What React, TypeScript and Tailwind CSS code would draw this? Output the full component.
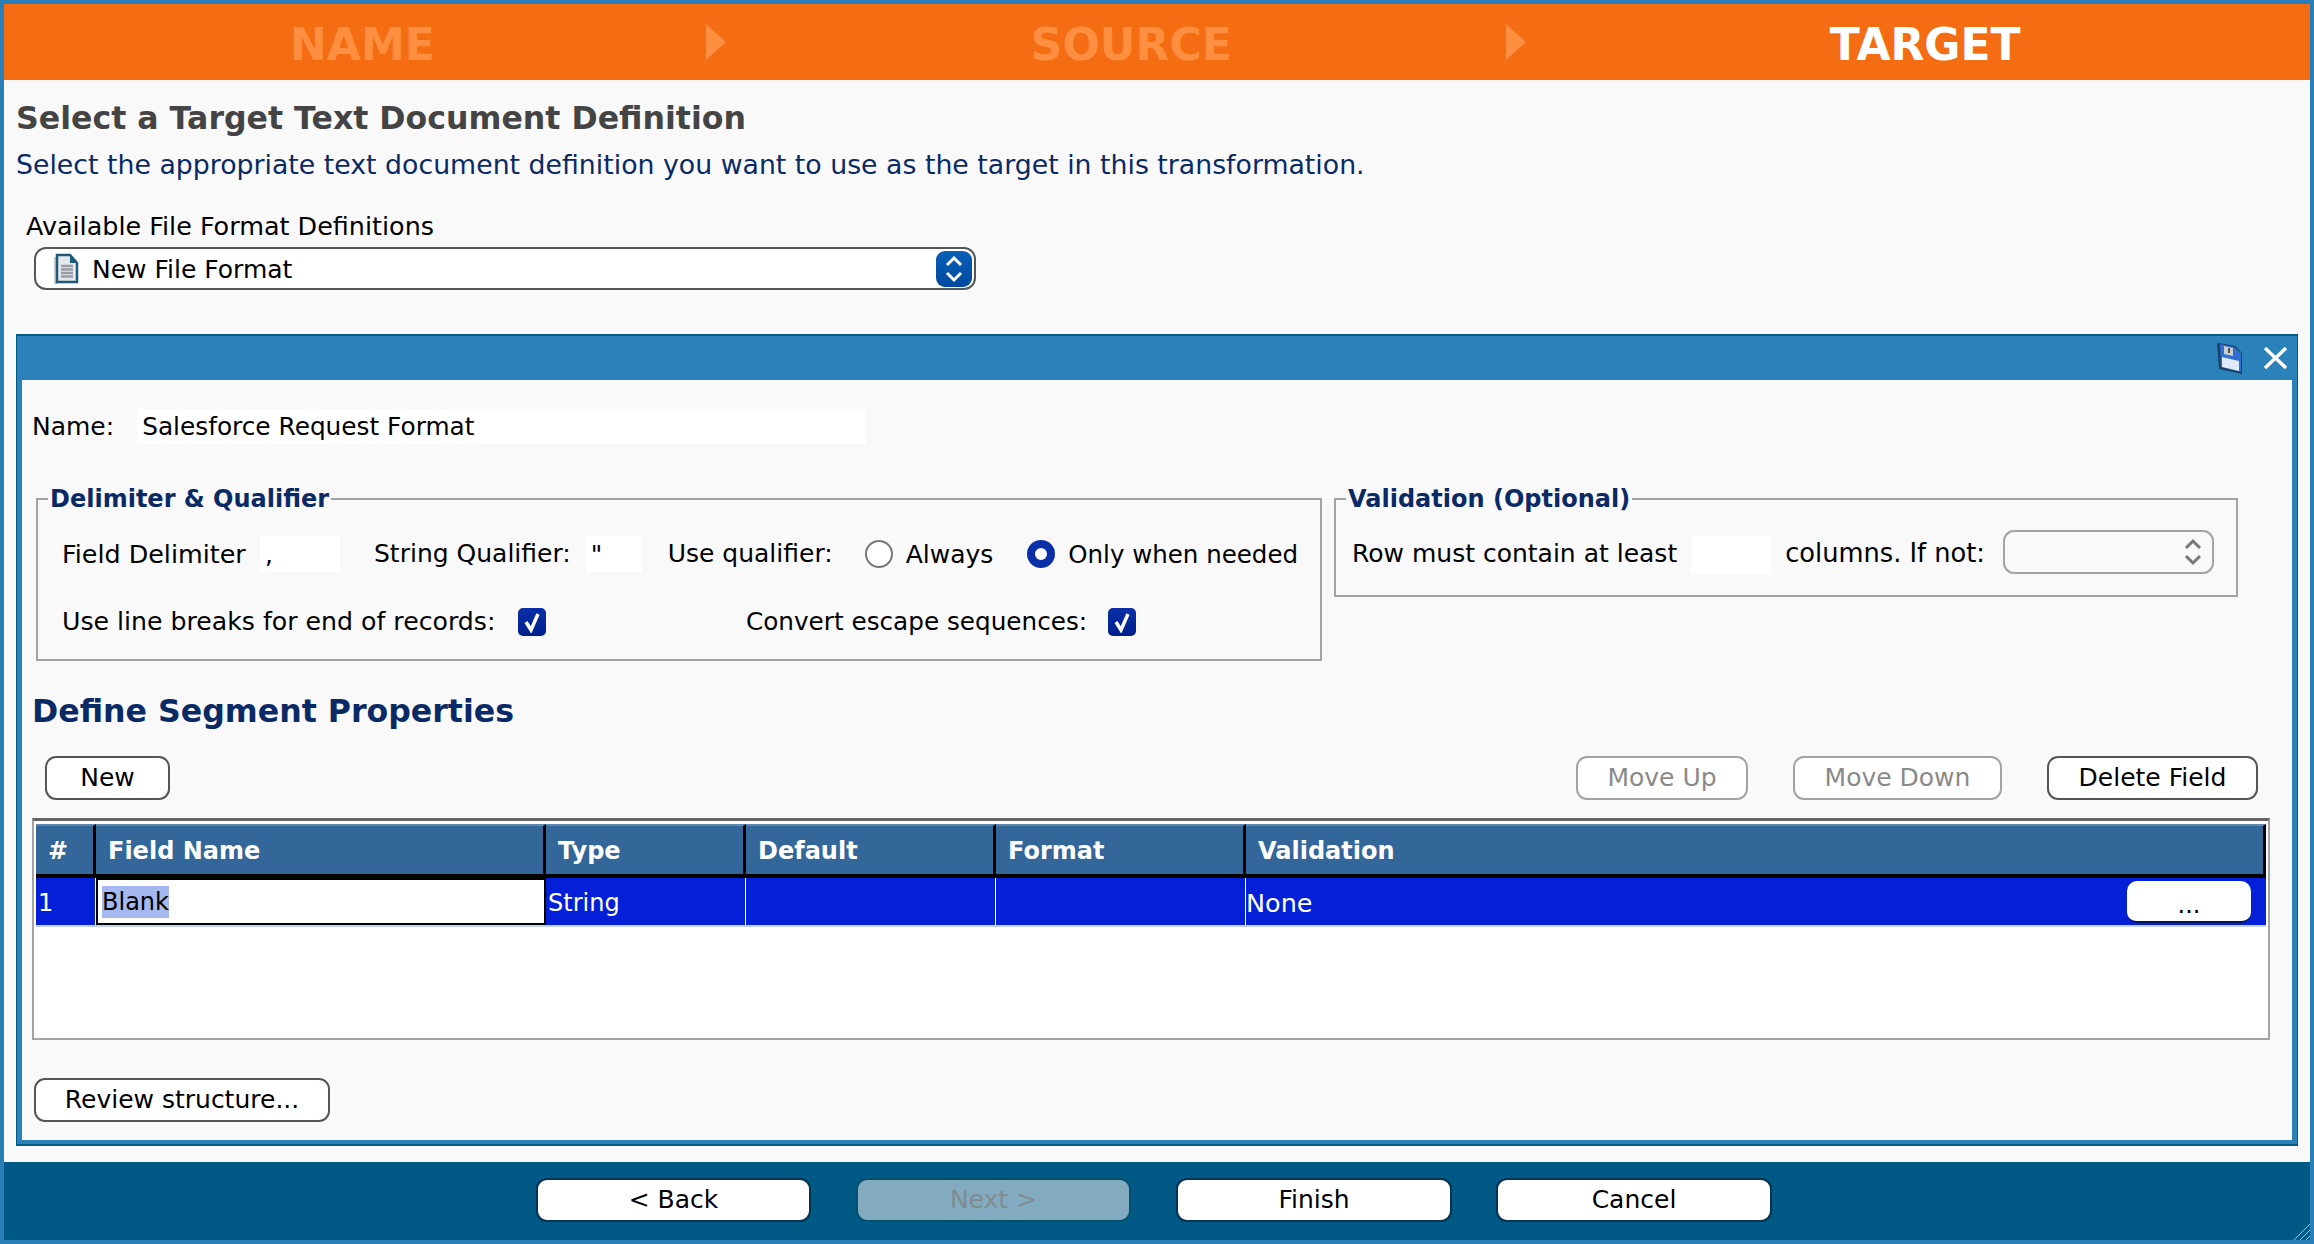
import type { ReactNode } from "react";

const FONT = "font-['DejaVu_Sans',sans-serif]";

function Button({ children, className }: { children: ReactNode; className: string }) {
  return (
    <button className={`flex h-[44px] items-center justify-center rounded-[11px] border-2 text-[25px] ${className}`}>
      {children}
    </button>
  );
}

function Arrow() {
  return (
    <svg width="20" height="36" viewBox="0 0 20 36" className="shrink-0">
      <path d="M0 0 L20 18 L0 36 Z" fill="#ff8f40" />
    </svg>
  );
}

function Checkbox({ className }: { className: string }) {
  return (
    <span className={`flex h-[28px] w-[28px] items-center justify-center rounded-[5px] bg-gradient-to-b from-[#0a2fa8] to-[#001f8c] ${className}`}>
      <svg width="18" height="22" viewBox="0 0 18 22">
        <path d="M3 11 L8 19 L15 3" fill="none" stroke="#fff" strokeWidth="3.500" />
      </svg>
    </span>
  );
}

function UpDown({ color }: { color: string }) {
  return (
    <svg width="18" height="28" viewBox="0 0 18 28">
      <path d="M2 10 L9 3 L16 10 M2 18 L9 25 L16 18" fill="none" stroke={color} strokeWidth="3" />
    </svg>
  );
}

const columns = [
  { name: "#", width: "w-[60px]" },
  { name: "Field Name", width: "w-[450px]" },
  { name: "Type", width: "w-[200px]" },
  { name: "Default", width: "w-[250px]" },
  { name: "Format", width: "w-[250px]" },
  { name: "Validation", width: "w-[1020px]" },
];

export default function App() {
  return (
    <main className={`flex h-[1244px] w-[2314px] flex-col overflow-hidden border-4 border-[#2a7fb8] bg-[#f9f9f9] text-[25px] text-black ${FONT}`}>
      {/* wizard steps */}
      <div className="flex h-[76px] shrink-0 items-center bg-[#f46d13] text-[44px] font-bold leading-none text-[#ff8f40]">
        <span className="ml-[286px] pt-[5px]">NAME</span>
        <span className="ml-[271px]"><Arrow /></span>
        <span className="ml-[305px] pt-[5px]">SOURCE</span>
        <span className="ml-[274px]"><Arrow /></span>
        <span className="ml-[304px] pt-[5px] text-white">TARGET</span>
      </div>

      <h1 className="ml-[12px] mt-[18px] text-[31.6px] font-bold leading-[40px] text-[#444444]">
        Select a Target Text Document Definition
      </h1>
      <p className="ml-[12px] mt-[9px] text-[26.75px] leading-[36px] text-[#0a2a66]">
        Select the appropriate text document definition you want to use as the target in this transformation.
      </p>

      <label className="ml-[22px] mt-[25px] text-[25.45px] leading-[36px]">Available File Format Definitions</label>
      <div className="ml-[30px] mt-[3px] flex h-[43px] w-[942px] items-center rounded-[12px] border-2 border-[#555555] bg-white">
        <svg width="26" height="32" viewBox="0 0 26 32" className="ml-[18px]">
          <path d="M4 30 H1 V4" fill="none" stroke="#c9ccd0" strokeWidth="2" />
          <path d="M3 2 H16 L23 10 V29 H3 Z" fill="#e4e8ec" stroke="#1f5a78" strokeWidth="2.500" />
          <path d="M16 2 L23 10 H16 Z" fill="#1f5a78" />
          <path d="M7 13 H19 M7 16.500 H19 M7 20 H19 M7 23.500 H19" stroke="#9a9ea2" strokeWidth="2.500" />
        </svg>
        <span className="ml-[12px] pt-[2px]">New File Format</span>
        <span className="ml-auto mr-[2px] flex h-[36px] w-[36px] items-center justify-center rounded-[9px] bg-gradient-to-b from-[#0a5fb8] to-[#0049a0]">
          <UpDown color="#ffffff" />
        </span>
      </div>

      {/* definition panel */}
      <section className="ml-[12px] mt-[44px] flex h-[812px] w-[2282px] flex-col border-x border-y-2 border-[#005a85]">
        <div className="flex h-[44px] shrink-0 items-center justify-end bg-[#2b82b8]">
          <svg width="25" height="31" viewBox="0 0 25 31">
            <path d="M0 0 L8 1 L18 3 L25 10 V31 L2 26 Z" fill="#1c3f66" />
            <path d="M3 1 L17 4 L24 10 V29 L4 24 Z" fill="#2f6fd0" />
            <path d="M7 3 L16 5 V13 L7 11 Z" fill="#c9ccd0" />
            <path d="M11 5 H13 V10 H11 Z" fill="#555555" />
            <path d="M5 14 L22 18 V28 L5 24 Z" fill="#dfe9fb" />
          </svg>
          <svg width="25" height="22" viewBox="0 0 25 22" className="ml-[21px] mr-[9px]">
            <path d="M2 1 L23 21 M23 1 L2 21" stroke="#fff" strokeWidth="3.500" />
          </svg>
        </div>
        <div className="flex flex-1 flex-col border-x-[5px] border-b-4 border-[#2b82b8] bg-[#f9f9f9]">
          <div className="mt-[29px] flex h-[35px] items-center pl-[10px]">
            <span>Name:</span>
            <span className="ml-[23px] flex h-[35px] w-[729px] items-center bg-white pl-[5px] text-[24.8px]">Salesforce Request Format</span>
          </div>

          <div className="mt-[39px] flex items-start">
            <fieldset className="ml-[14px] h-[178px] w-[1286px] border-2 border-[#a3a3a3] pl-[24px]">
              <legend className="ml-[-14px] px-[2px] pt-[1px] text-[24px] font-bold leading-[30px] text-[#0a2a66]">Delimiter &amp; Qualifier</legend>
              <div className="mt-[22px] flex h-[36px] items-center">
                <span className="w-[198px] text-[25.4px]">Field Delimiter</span>
                <span className="flex h-[36px] w-[80px] bg-white pl-[5px]">,</span>
                <span className="ml-[34px]">String Qualifier:</span>
                <span className="ml-[15px] flex h-[36px] w-[56px] bg-white pl-[5px]">"</span>
                <span className="ml-[26px]">Use qualifier:</span>
                <span className="ml-[32px] h-[28px] w-[28px] rounded-full border-2 border-[#777777] bg-white" />
                <span className="ml-[13px] pt-[2px]">Always</span>
                <span className="ml-[34px] flex h-[28px] w-[28px] items-center justify-center rounded-full bg-[#0a2fa8]">
                  <span className="h-[12px] w-[12px] rounded-full bg-white" />
                </span>
                <span className="ml-[13px] pt-[2px] text-[24.5px]">Only when needed</span>
              </div>
              <div className="mt-[32px] flex h-[36px] items-center">
                <span className="w-[456px] text-[25.2px]">Use line breaks for end of records:</span>
                <Checkbox className="" />
                <span className="ml-[200px] text-[24.7px]">Convert escape sequences:</span>
                <Checkbox className="ml-[21px]" />
              </div>
            </fieldset>

            <fieldset className="ml-[12px] h-[114px] w-[904px] border-2 border-[#a3a3a3] pl-[16px]">
              <legend className="ml-[-6px] px-[2px] pt-[1px] text-[24px] font-bold leading-[30px] text-[#0a2a66]">Validation (Optional)</legend>
              <div className="mt-[16px] flex h-[44px] items-center">
                <span className="pt-[3px]">Row must contain at least</span>
                <span className="ml-[14px] mt-[6px] h-[38px] w-[80px] bg-white" />
                <span className="ml-[14px] pt-[3px] text-[25.7px]">columns. If not:</span>
                <span className="ml-[18px] flex h-[44px] w-[211px] items-center justify-end rounded-[11px] border-2 border-[#a3a3a3] pr-[10px]">
                  <UpDown color="#777777" />
                </span>
              </div>
            </fieldset>
          </div>

          <h2 className="ml-[10px] mt-[30px] text-[31.6px] font-bold leading-[40px] text-[#0a2a66]">Define Segment Properties</h2>

          <div className="mt-[25px] flex items-center">
            <Button className="ml-[23px] w-[125px] border-[#555555] bg-white">New</Button>
            <Button className="ml-[1406px] w-[172px] border-[#a3a3a3] bg-white text-[#8a8a8a]">Move Up</Button>
            <Button className="ml-[45px] w-[209px] border-[#a3a3a3] bg-white text-[#8a8a8a]">Move Down</Button>
            <Button className="ml-[45px] w-[211px] border-[#555555] bg-white">Delete Field</Button>
          </div>

          {/* segment table */}
          <div className="ml-[10px] mt-[18px] h-[222px] w-[2238px] border-x-2 border-b-2 border-t-[3px] border-x-[#a3a3a3] border-b-[#a3a3a3] border-t-[#666666] bg-white pl-[2px] pt-[3px]">
            <div className="flex h-[54px] text-[24px] font-bold text-white">
              {columns.map((col) => (
                <div key={col.name} className={`flex items-center border-b-4 border-r-[3px] border-t-2 border-b-black border-r-black border-t-[#5f86ad] bg-[#336699] pl-[12px] pt-[2px] ${col.width}`}>
                  {col.name}
                </div>
              ))}
            </div>
            <div className="flex h-[49px] w-[2230px] items-stretch border-b-2 border-[#c5d0f5] bg-[#0320d8] text-[24px] text-white">
              <div className="flex w-[60px] items-center border-r border-white pl-[2px] pt-[3px]">1</div>
              <div className="flex w-[450px] items-center border-2 border-black bg-white pl-[4px] pt-[1px] text-black">
                <span className="h-[32px] bg-[#a5b8f0] leading-[32px]">Blank</span>
              </div>
              <div className="flex w-[200px] items-center border-r border-white pl-[2px] pt-[3px]">String</div>
              <div className="w-[250px] border-r border-white" />
              <div className="w-[250px] border-r border-white" />
              <div className="flex w-[1020px] items-center">
                <span className="pt-[3px] text-[25.5px]">None</span>
                <button className="ml-auto mr-[15px] flex h-[42px] w-[124px] items-center justify-center rounded-[10px] border-b-2 border-[#06144f] bg-white pt-[8px] text-[24px] leading-none text-black">...</button>
              </div>
            </div>
          </div>

          <Button className="ml-[12px] mt-[38px] w-[296px] border-[#555555] bg-white">Review structure...</Button>
        </div>
      </section>

      {/* wizard buttons */}
      <footer className="relative mt-[16px] flex h-[78px] shrink-0 items-center bg-[#005a85] pb-[2px]">
        <Button className="ml-[532px] w-[275px] border-[#06334f] bg-white">&lt; Back</Button>
        <Button className="ml-[45px] w-[275px] border-[#06506f] bg-[#82abc0] text-[#7f8c92]">Next &gt;</Button>
        <Button className="ml-[45px] w-[276px] border-[#06334f] bg-white">Finish</Button>
        <Button className="ml-[44px] w-[276px] border-[#06334f] bg-white">Cancel</Button>
        <svg width="20" height="20" viewBox="0 0 20 20" className="absolute bottom-0 right-0">
          <path d="M4 20 L20 4 M10 20 L20 10 M16 20 L20 16" stroke="#9fc4d8" strokeWidth="1" />
        </svg>
      </footer>
    </main>
  );
}
